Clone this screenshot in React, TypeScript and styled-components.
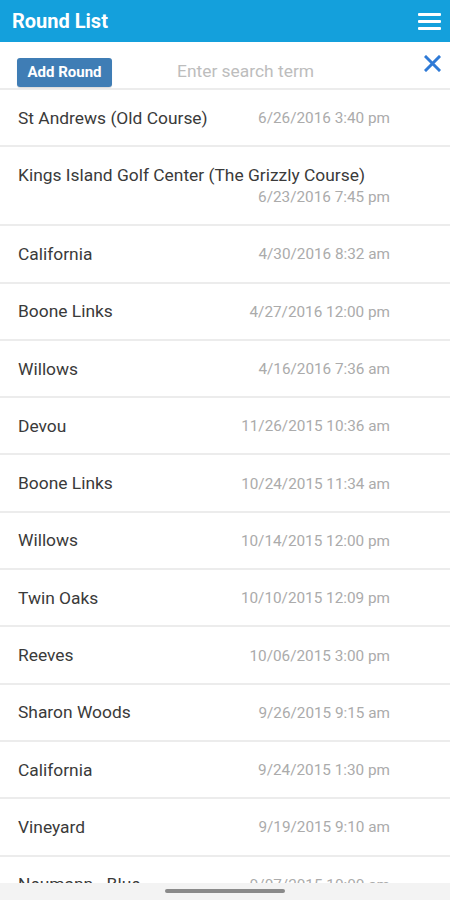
import React, { useState } from 'react'
import styled, { createGlobalStyle } from 'styled-components'

interface IRound {
  course: string
  date: string
}

const rounds: IRound[] = [
  { course: 'St Andrews (Old Course)', date: '6/26/2016 3:40 pm' },
  { course: 'Kings Island Golf Center (The Grizzly Course)', date: '6/23/2016 7:45 pm' },
  { course: 'California', date: '4/30/2016 8:32 am' },
  { course: 'Boone Links', date: '4/27/2016 12:00 pm' },
  { course: 'Willows', date: '4/16/2016 7:36 am' },
  { course: 'Devou', date: '11/26/2015 10:36 am' },
  { course: 'Boone Links', date: '10/24/2015 11:34 am' },
  { course: 'Willows', date: '10/14/2015 12:00 pm' },
  { course: 'Twin Oaks', date: '10/10/2015 12:09 pm' },
  { course: 'Reeves', date: '10/06/2015 3:00 pm' },
  { course: 'Sharon Woods', date: '9/26/2015 9:15 am' },
  { course: 'California', date: '9/24/2015 1:30 pm' },
  { course: 'Vineyard', date: '9/19/2015 9:10 am' },
  { course: 'Neumann - Blue', date: '9/07/2015 10:00 am' },
]

const GlobalStyle = createGlobalStyle`
  html, body {
    margin: 0;
    padding: 0;
    background: #ffffff;
    font-family: Roboto, "Liberation Sans", sans-serif;
  }
`

const SScreen = styled.div`
  width: 450px;
  height: 900px;
  display: flex;
  flex-direction: column;
  overflow: hidden;
  position: relative;
`

const SHeader = styled.div`
  height: 42px;
  flex-shrink: 0;
  background: #14a0dc;
  display: flex;
  align-items: center;
  justify-content: space-between;
  padding: 0 9px 0 12px;
`

const STitle = styled.h1`
  margin: 0;
  color: #ffffff;
  font-size: 20px;
  font-weight: 700;
`

const SMenuButton = styled.div`
  width: 23px;
  display: flex;
  flex-direction: column;
  gap: 4px;
  margin-top: 1px;

  span {
    display: block;
    height: 3px;
    border-radius: 1px;
    background: #ffffff;
  }
`

const SSearchBar = styled.div`
  height: 48px;
  flex-shrink: 0;
  display: flex;
  align-items: center;
  padding: 0 9px 0 17px;
  border-bottom: 2px solid #ececec;
  box-sizing: border-box;
`

const SAddButton = styled.div`
  width: 95px;
  height: 29px;
  margin-top: 14px;
  background: #3f7db5;
  border-radius: 3px;
  color: #ffffff;
  font-size: 15px;
  font-weight: 700;
  display: flex;
  align-items: center;
  justify-content: center;
  box-shadow: 0 1px 1px rgba(0, 0, 0, 0.15);
`

const SSearchInput = styled.input`
  flex: 1;
  min-width: 0;
  border: none;
  outline: none;
  background: transparent;
  font-family: inherit;
  font-size: 17.4px;
  color: #333;
  margin-left: 65px;
  margin-top: 11px;
  padding: 0;

  &::placeholder {
    color: #bdbdbd;
  }
`

const SClear = styled.div`
  width: 17px;
  height: 17px;
  margin-bottom: 4px;
  display: flex;
`

const SList = styled.div`
  flex: 1;
  overflow: hidden;
`

const SRow = styled.div<{ $wrap?: boolean }>`
  box-sizing: border-box;
  height: ${(p) => (p.$wrap ? '79px' : '57.3px')};
  border-bottom: 2px solid #ececec;
  display: flex;
  flex-wrap: wrap;
  align-items: center;
  align-content: center;
  justify-content: space-between;
  padding: 0 60px 0 18px;
`

const SCourse = styled.div`
  color: #3a3a3a;
  font-size: 17.4px;
`

const SDate = styled.div<{ $wrap?: boolean }>`
  color: #ababab;
  font-size: 15.3px;
  margin-top: 1px;
  ${(p) => (p.$wrap ? 'width: 100%; text-align: right; margin-top: 3px;' : '')}
`

const SNavBar = styled.div`
  position: absolute;
  left: 0;
  right: 0;
  bottom: 0;
  height: 17px;
  background: #f3f3f3;
  display: flex;
  align-items: center;
  justify-content: center;
`

const SPill = styled.div`
  width: 120px;
  height: 4px;
  border-radius: 2px;
  background: #8a8a8a;
  margin-bottom: 1px;
`

const App = () => {
  const [term, setTerm] = useState('')

  return (
    <SScreen>
      <GlobalStyle />
      <SHeader>
        <STitle>Round List</STitle>
        <SMenuButton>
          <span />
          <span />
          <span />
        </SMenuButton>
      </SHeader>
      <SSearchBar>
        <SAddButton>Add Round</SAddButton>
        <SSearchInput
          placeholder='Enter search term'
          value={term}
          onChange={(e) => setTerm(e.target.value)}
        />
        <SClear onClick={() => setTerm('')}>
          <svg width='17' height='17' viewBox='0 0 17 17'>
            <path d='M2 2 L15 15 M15 2 L2 15' stroke='#2f7ad6' strokeWidth='3' strokeLinecap='square' />
          </svg>
        </SClear>
      </SSearchBar>
      <SList>
        {rounds.map((r, i) => {
          const wrap = r.course.length > 30
          return (
            <SRow key={i} $wrap={wrap}>
              <SCourse>{r.course}</SCourse>
              <SDate $wrap={wrap}>{r.date}</SDate>
            </SRow>
          )
        })}
      </SList>
      <SNavBar>
        <SPill />
      </SNavBar>
    </SScreen>
  )
}

export default App
